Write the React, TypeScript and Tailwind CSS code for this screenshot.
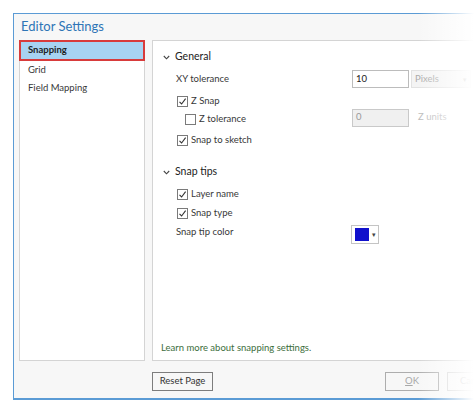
import React from 'react';

function Check({ checked }: { checked: boolean }) {
  return (
    <span className="flex h-[11px] w-[11px] shrink-0 items-center justify-center border border-[#7a7a7a] bg-white">
      {checked && (
        <svg width="9" height="9" viewBox="0 0 9 9">
          <path d="M1.5 4.8 L3.6 7 L7.6 1.6" fill="none" stroke="#333" strokeWidth="1.1" />
        </svg>
      )}
    </span>
  );
}

function Chevron() {
  return (
    <svg width="7" height="5" viewBox="0 0 7 5" className="mr-[5px] shrink-0">
      <path d="M0.8 1 L3.5 3.8 L6.2 1" fill="none" stroke="#444" strokeWidth="1.1" />
    </svg>
  );
}

function CheckRow({ label, checked, className }: { label: string; checked: boolean; className?: string }) {
  return (
    <div className={'flex h-[18px] items-center gap-[3px] ' + (className ?? '')}>
      <Check checked={checked} />
      <span>{label}</span>
    </div>
  );
}

export default function App() {
  return (
    <div className="relative h-[411px] w-[474px] overflow-hidden bg-white text-[9.5px] text-[#383838] [font-family:Lato,'Noto_Sans',sans-serif]">
      <div className="ml-[13px] mt-[13px] flex h-[387px] w-[490px] flex-col border border-[#5b9bd5] border-b-2 bg-[#f7f7f7]">
        <div className="flex h-[26px] items-center pl-[7px] text-[13px] text-[#2e75b6]">Editor Settings</div>

        <div className="flex gap-[7px] pl-[5px]">
          <div className="h-[321px] w-[126px] border border-[#d4d4d4] bg-white">
            <div className="-mx-px -mt-px flex h-[21px] items-center border-2 border-[#d83b3b] bg-[#a7d3f2] pl-[7px] font-bold text-[#222]">
              Snapping
            </div>
            <div className="flex h-[18px] items-center pl-[8px]">Grid</div>
            <div className="flex h-[18px] items-center pl-[8px]">Field Mapping</div>
          </div>

          <div className="flex h-[321px] flex-1 flex-col border border-[#d4d4d4] bg-white pl-[8px]">
            <div className="mt-[7px] flex h-[18px] items-center pl-[2px] text-[10.5px] text-[#222]">
              <Chevron />
              General
            </div>

            <div className="mt-[4px] flex h-[18px] items-center pl-[15px]">
              <span className="w-[176px]">XY tolerance</span>
              <div className="flex h-[18px] w-[57px] items-center border border-[#bcbcbc] bg-white pl-[3px] text-[#222]">10</div>
              <div className="ml-[2px] flex h-[18px] w-[60px] items-center justify-between border border-[#e2e2e2] bg-[#f4f4f4] px-[3px] text-[#aaa]">
                <span>Pixels</span>
                <span className="text-[7px]">▾</span>
              </div>
            </div>

            <CheckRow className="mt-[4px] pl-[16px]" label="Z Snap" checked />

            <div className="flex h-[18px] items-center pl-[24px]">
              <div className="flex w-[167px] items-center gap-[3px]">
                <Check checked={false} />
                <span>Z tolerance</span>
              </div>
              <div className="-mt-[3px] flex h-[18px] w-[57px] items-center border border-[#c9c9c9] bg-[#f0f0f0] pl-[3px] text-[#999]">0</div>
              <span className="-mt-[3px] ml-[9px] text-[#bbb]">Z units</span>
            </div>

            <CheckRow className="mt-[3px] pl-[16px]" label="Snap to sketch" checked />

            <div className="mt-[14px] flex h-[18px] items-center pl-[2px] text-[10.5px] text-[#222]">
              <Chevron />
              Snap tips
            </div>

            <CheckRow className="mt-[4px] pl-[16px]" label="Layer name" checked />
            <CheckRow className="mt-[1px] pl-[16px]" label="Snap type" checked />

            <div className="mt-[1px] flex h-[22px] items-center pl-[15px]">
              <span className="-mt-[4px] w-[175px]">Snap tip color</span>
              <div className="flex h-[19px] w-[28px] items-center gap-[3px] border border-[#c4c4c4] bg-white pl-[3px]">
                <span className="h-[13px] w-[14px] bg-[#1010cc]" />
                <span className="text-[7px] text-[#444]">▾</span>
              </div>
            </div>

            <div className="mb-[5px] mt-auto flex h-[14px] items-center text-[#3c6e3c]">Learn more about snapping settings.</div>
          </div>
        </div>

        <div className="mt-[11px] flex items-center pl-[138px]">
          <button className="h-[19px] w-[61px] border border-[#7d7d7d] bg-[#f7f7f7] text-[9.5px] text-[#333]">Reset Page</button>
          <button className="ml-[172px] h-[19px] w-[54px] border border-[#adadad] bg-[#f7f7f7] text-[9.5px] text-[#a8a8a8]">
            <span className="underline">O</span>K
          </button>
          <button className="ml-[8px] h-[19px] w-[54px] border border-[#d0d0d0] bg-[#f7f7f7] text-[9.5px] text-[#bbb]">Cancel</button>
        </div>
      </div>

      <div className="pointer-events-none absolute right-0 top-0 h-full w-[56px] bg-linear-to-r from-transparent to-white" />
    </div>
  );
}
